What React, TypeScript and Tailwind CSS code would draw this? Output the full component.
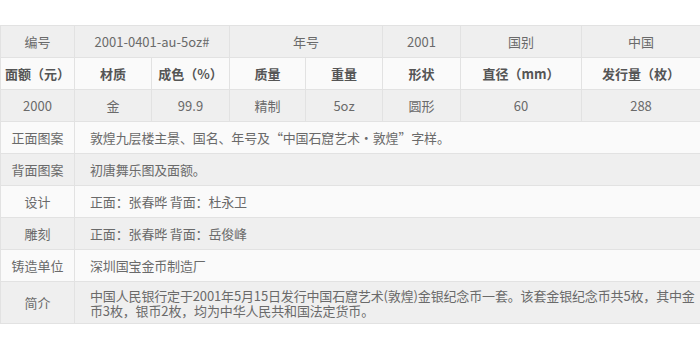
import React from "react";

const font = {
  fontFamily: '"Noto Sans CJK SC", "Liberation Sans", sans-serif',
};

const specHeads = [
  "面额（元）",
  "材质",
  "成色（%）",
  "质量",
  "重量",
  "形状",
  "直径（mm）",
  "发行量（枚）",
];

const specValues = ["2000", "金", "99.9", "精制", "5oz", "圆形", "60", "288"];

const details: { label: string; text: string; tall?: boolean }[] = [
  {
    label: "正面图案",
    text: "敦煌九层楼主景、国名、年号及“中国石窟艺术·敦煌”字样。",
  },
  { label: "背面图案", text: "初唐舞乐图及面额。" },
  { label: "设计", text: "正面：张春晔 背面：杜永卫" },
  { label: "雕刻", text: "正面：张春晔 背面：岳俊峰" },
  { label: "铸造单位", text: "深圳国宝金币制造厂" },
  {
    label: "简介",
    text: "中国人民银行定于2001年5月15日发行中国石窟艺术(敦煌)金银纪念币一套。该套金银纪念币共5枚，其中金币3枚，银币2枚，均为中华人民共和国法定货币。",
    tall: true,
  },
];

const cell = "border border-[#e2e2e2] px-1 text-center align-middle";

export default function App() {
  return (
    <div
      className="h-[349px] w-[700px] overflow-hidden bg-white pt-[25px] text-[13px] text-[#6a6a6a]"
      style={font}
    >
      <table className="w-[700px] table-fixed border-collapse">
        <colgroup>
          <col className="w-[74px]" />
          <col className="w-[77px]" />
          <col className="w-[78px]" />
          <col className="w-[76px]" />
          <col className="w-[77px]" />
          <col className="w-[78px]" />
          <col className="w-[121px]" />
          <col className="w-[119px]" />
        </colgroup>
        <tbody>
          <tr className="h-[32px] bg-[#efefef]">
            <td className={cell}>编号</td>
            <td className={cell} colSpan={2}>
              2001-0401-au-5oz#
            </td>
            <td className={cell} colSpan={2}>
              年号
            </td>
            <td className={cell}>2001</td>
            <td className={cell}>国别</td>
            <td className={cell}>中国</td>
          </tr>
          <tr className="h-[32px] bg-[#fafafa]">
            {specHeads.map((h) => (
              <td key={h} className={`${cell} font-bold text-[#555]`}>
                {h}
              </td>
            ))}
          </tr>
          <tr className="h-[32px] bg-[#efefef]">
            {specValues.map((v, i) => (
              <td key={i} className={cell}>
                {v}
              </td>
            ))}
          </tr>
          {details.map((d, i) => (
            <tr
              key={d.label}
              className={`${d.tall ? "h-[42px]" : "h-[32px]"} ${
                i % 2 === 0 ? "bg-[#fafafa]" : "bg-[#efefef]"
              }`}
            >
              <td className={cell}>{d.label}</td>
              <td
                colSpan={7}
                className="border border-[#e2e2e2] pl-[15px] pr-0 text-left align-middle leading-[15px] tracking-[-0.15px]"
              >
                {d.text}
              </td>
            </tr>
          ))}
        </tbody>
      </table>
    </div>
  );
}
